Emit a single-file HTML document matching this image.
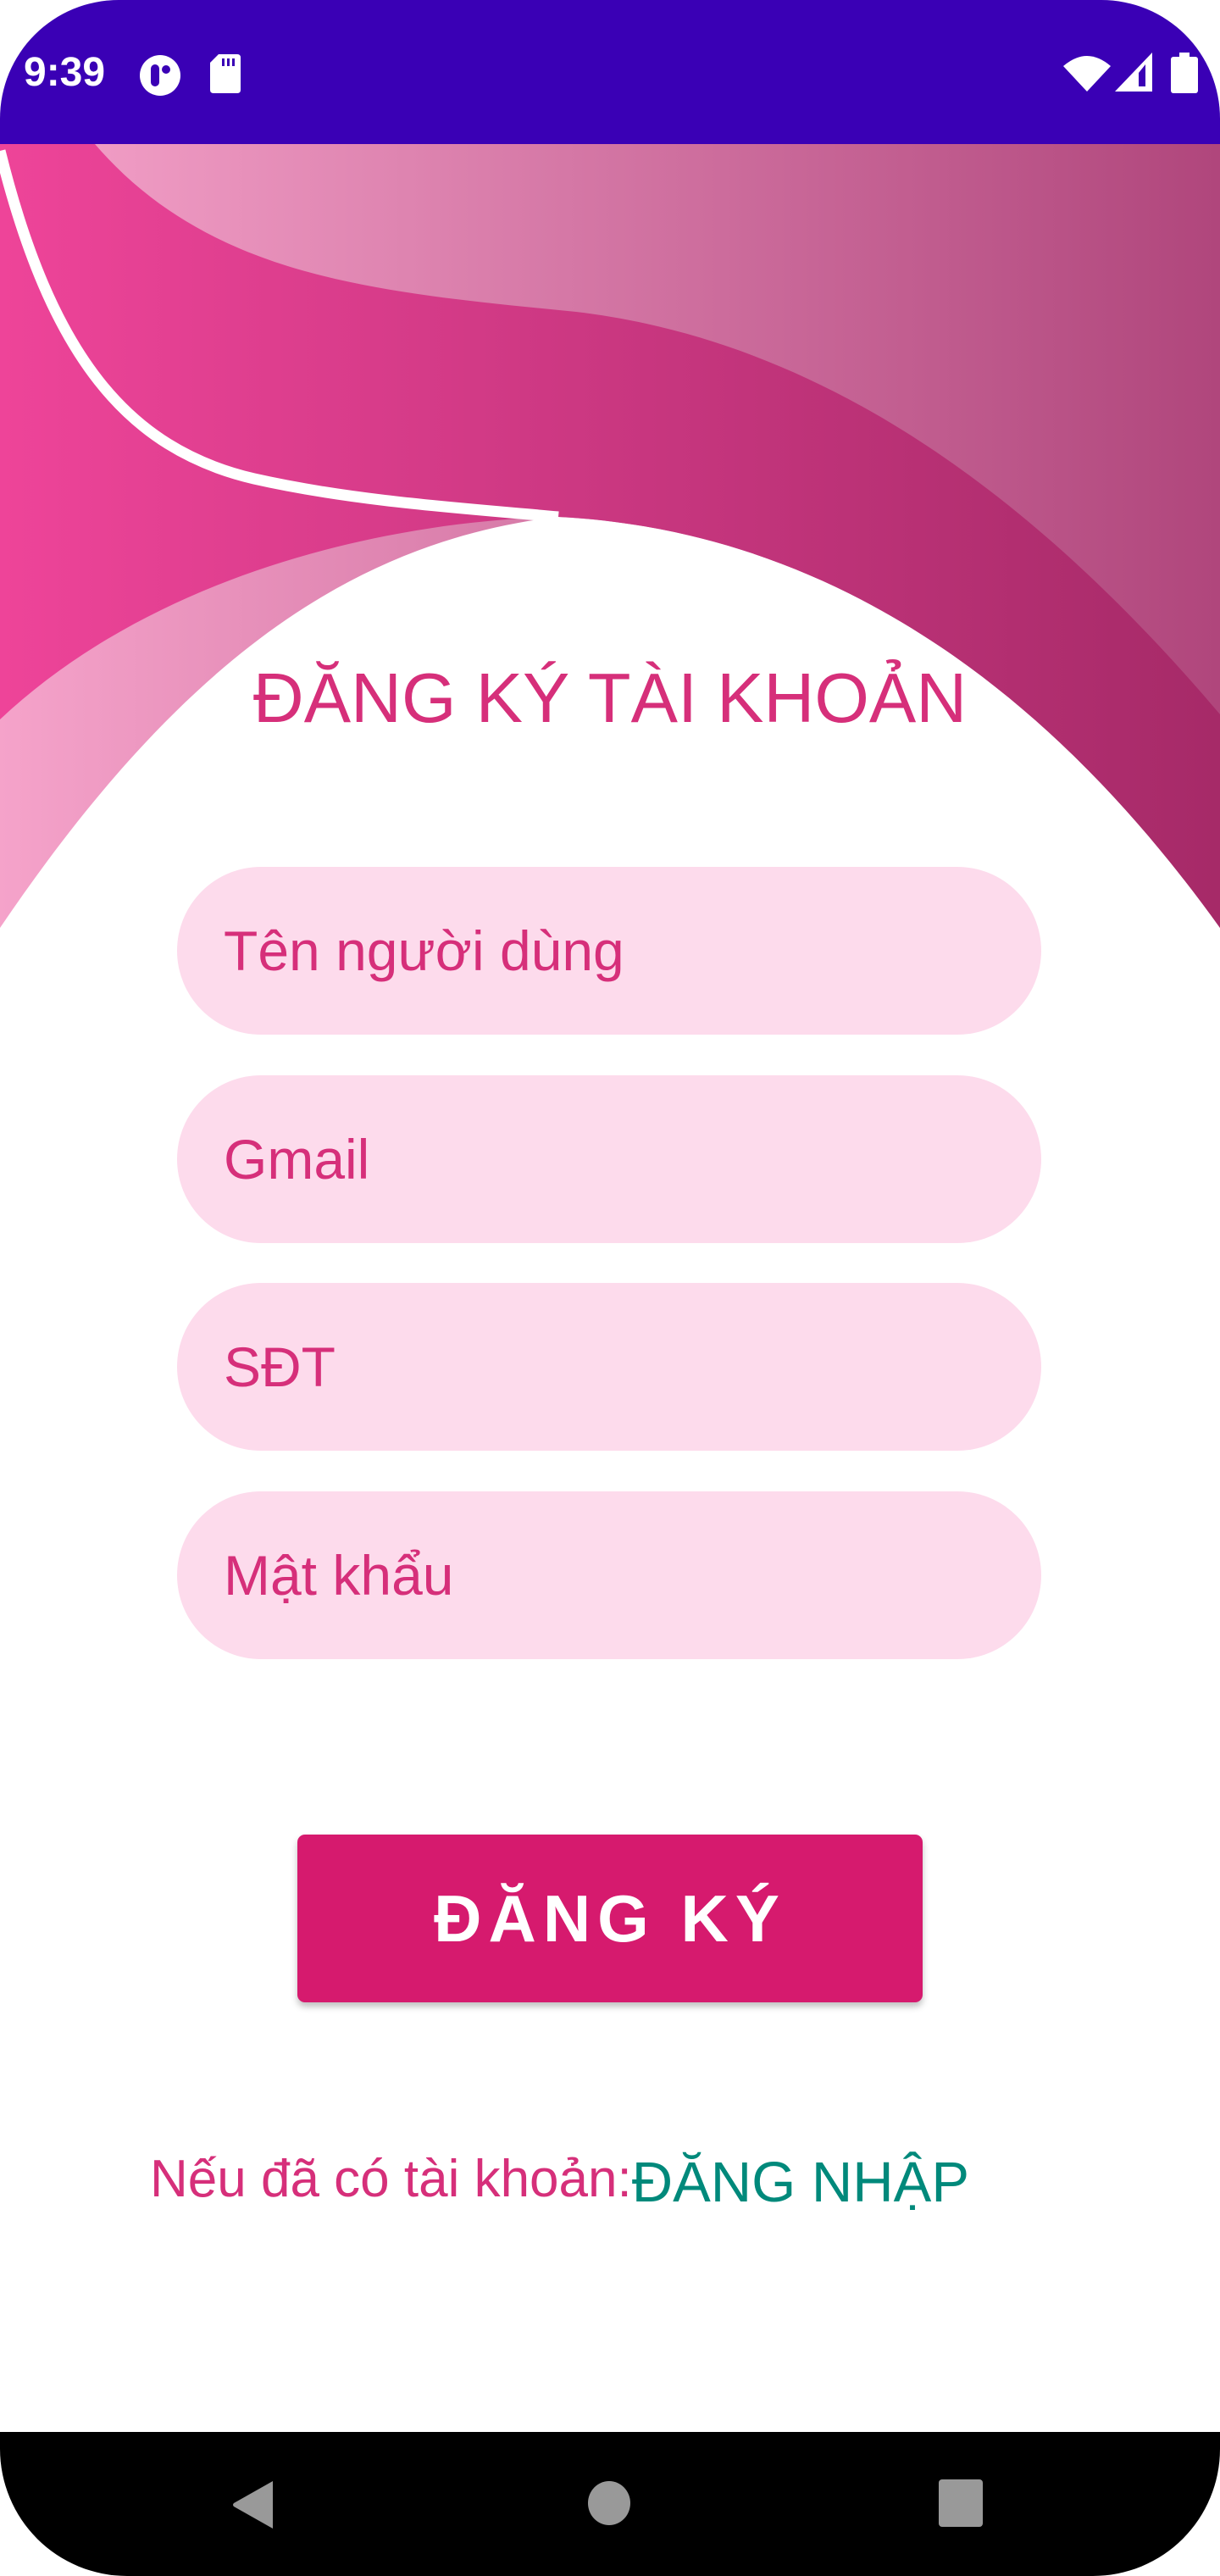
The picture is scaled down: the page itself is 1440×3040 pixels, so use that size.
<!DOCTYPE html>
<html><head><meta charset="utf-8">
<style>
html,body{margin:0;padding:0;}
body{width:1440px;height:3040px;position:relative;overflow:hidden;background:#fff;font-family:"Liberation Sans","Noto Sans CJK SC",sans-serif;}
.status{position:absolute;left:0;top:0;width:1440px;height:170px;background:#3a00b5;border-radius:140px 140px 0 0;}
.time{position:absolute;left:28px;top:60px;color:#fff;font-size:48px;line-height:52px;font-weight:bold;}
.nav{position:absolute;left:0;top:2870px;width:1440px;height:170px;background:#000;border-radius:0 0 150px 150px;}
.title{position:absolute;left:0;width:1440px;top:778px;text-align:center;color:#d62f7a;font-size:83px;line-height:92px;}
.field{position:absolute;left:209px;width:1020px;height:198px;border-radius:99px;background:#fddbec;color:#d62f7a;font-size:66px;line-height:198px;box-sizing:border-box;padding-left:55px;}
.btn{position:absolute;left:351px;top:2165px;width:738px;height:198px;background:#d61a6e;border-radius:9px;box-shadow:0 5px 8px rgba(0,0,0,0.25);color:#fff;text-align:center;font-size:78px;line-height:198px;letter-spacing:8px;font-weight:bold;}
.bottom{position:absolute;left:177px;top:2530px;font-size:62px;line-height:80px;color:#d62f7a;white-space:nowrap;}
.bottom span{color:#00897b;font-size:67px;position:relative;top:6px;}
</style></head><body>
<svg style="position:absolute;left:0;top:170px" width="1440" height="930" viewBox="0 170 1440 930">
<defs>
<linearGradient id="lg" x1="0" x2="1" y1="0" y2="0"><stop offset="0" stop-color="#f5a3ca"/><stop offset="1" stop-color="#b0467c"/></linearGradient>
<linearGradient id="dg" x1="0" x2="1" y1="0" y2="0"><stop offset="0" stop-color="#ee4499"/><stop offset="1" stop-color="#a62a68"/></linearGradient>
</defs>
<path d="M0,170 H1440 V1095 C1300,900 1050,630 659,610 C400,640 200,800 0,1095 Z" fill="url(#lg)"/>
<path d="M0,170 H112 C250,330 450,345 680,368 C950,400 1200,560 1440,843 V1095 C1300,900 1050,630 659,610 C450,615 180,680 0,849 Z" fill="url(#dg)"/>
<path d="M0,178 C60,420 150,530 300,565 C420,592 550,600 659,610" fill="none" stroke="#fff" stroke-width="13"/>
</svg>
<div class="status">
<div class="time">9:39</div>
<svg style="position:absolute;left:164px;top:64px" width="50" height="50" viewBox="0 0 50 50"><circle cx="25" cy="25" r="24" fill="#fff"/><rect x="14" y="12" width="10" height="26" rx="5" fill="#3a00b5"/><circle cx="32" cy="18" r="5" fill="#3a00b5"/></svg>
<svg style="position:absolute;left:248px;top:64px" width="36" height="46" viewBox="0 0 36 46"><path d="M10,0 H32 Q36,0 36,4 V42 Q36,46 32,46 H4 Q0,46 0,42 V10 Z" fill="#fff"/><rect x="14" y="5" width="3" height="9" fill="#3a00b5"/><rect x="20" y="5" width="3" height="9" fill="#3a00b5"/><rect x="26" y="5" width="3" height="9" fill="#3a00b5"/></svg>
<svg style="position:absolute;left:1255px;top:64px" width="56" height="44" viewBox="0 0 56 44"><path d="M0,14 Q28,-10 56,14 L28,44 Z" fill="#fff"/></svg>
<svg style="position:absolute;left:1316px;top:62px" width="44" height="46" viewBox="0 0 44 46"><path d="M44,0 V46 H0 Z" fill="#fff"/><path d="M36,14 V40 H28 V24 Z" fill="#3a00b5"/></svg>
<svg style="position:absolute;left:1382px;top:62px" width="32" height="48" viewBox="0 0 32 48"><rect x="10" y="0" width="12" height="6" fill="#fff"/><rect x="0" y="5" width="32" height="43" rx="3" fill="#fff"/></svg>
</div>
<div class="title">ĐĂNG KÝ TÀI KHOẢN</div>
<div class="field" style="top:1023px">Tên người dùng</div>
<div class="field" style="top:1269px">Gmail</div>
<div class="field" style="top:1514px">SĐT</div>
<div class="field" style="top:1760px">Mật khẩu</div>
<div class="btn">ĐĂNG KÝ</div>
<div class="bottom">Nếu đã có tài khoản:<span>ĐĂNG NHẬP</span></div>
<div class="nav">
<svg style="position:absolute;left:274px;top:58px" width="52" height="56" viewBox="0 0 52 56"><path d="M48,0 V56 L2,30 Q0,28 2,26 Z" fill="#999"/></svg>
<svg style="position:absolute;left:694px;top:56px" width="50" height="56"><ellipse cx="25" cy="28" rx="25" ry="26" fill="#999"/></svg>
<svg style="position:absolute;left:1108px;top:56px" width="52" height="56"><rect width="52" height="56" rx="4" fill="#999"/></svg>
</div>
</body></html>
